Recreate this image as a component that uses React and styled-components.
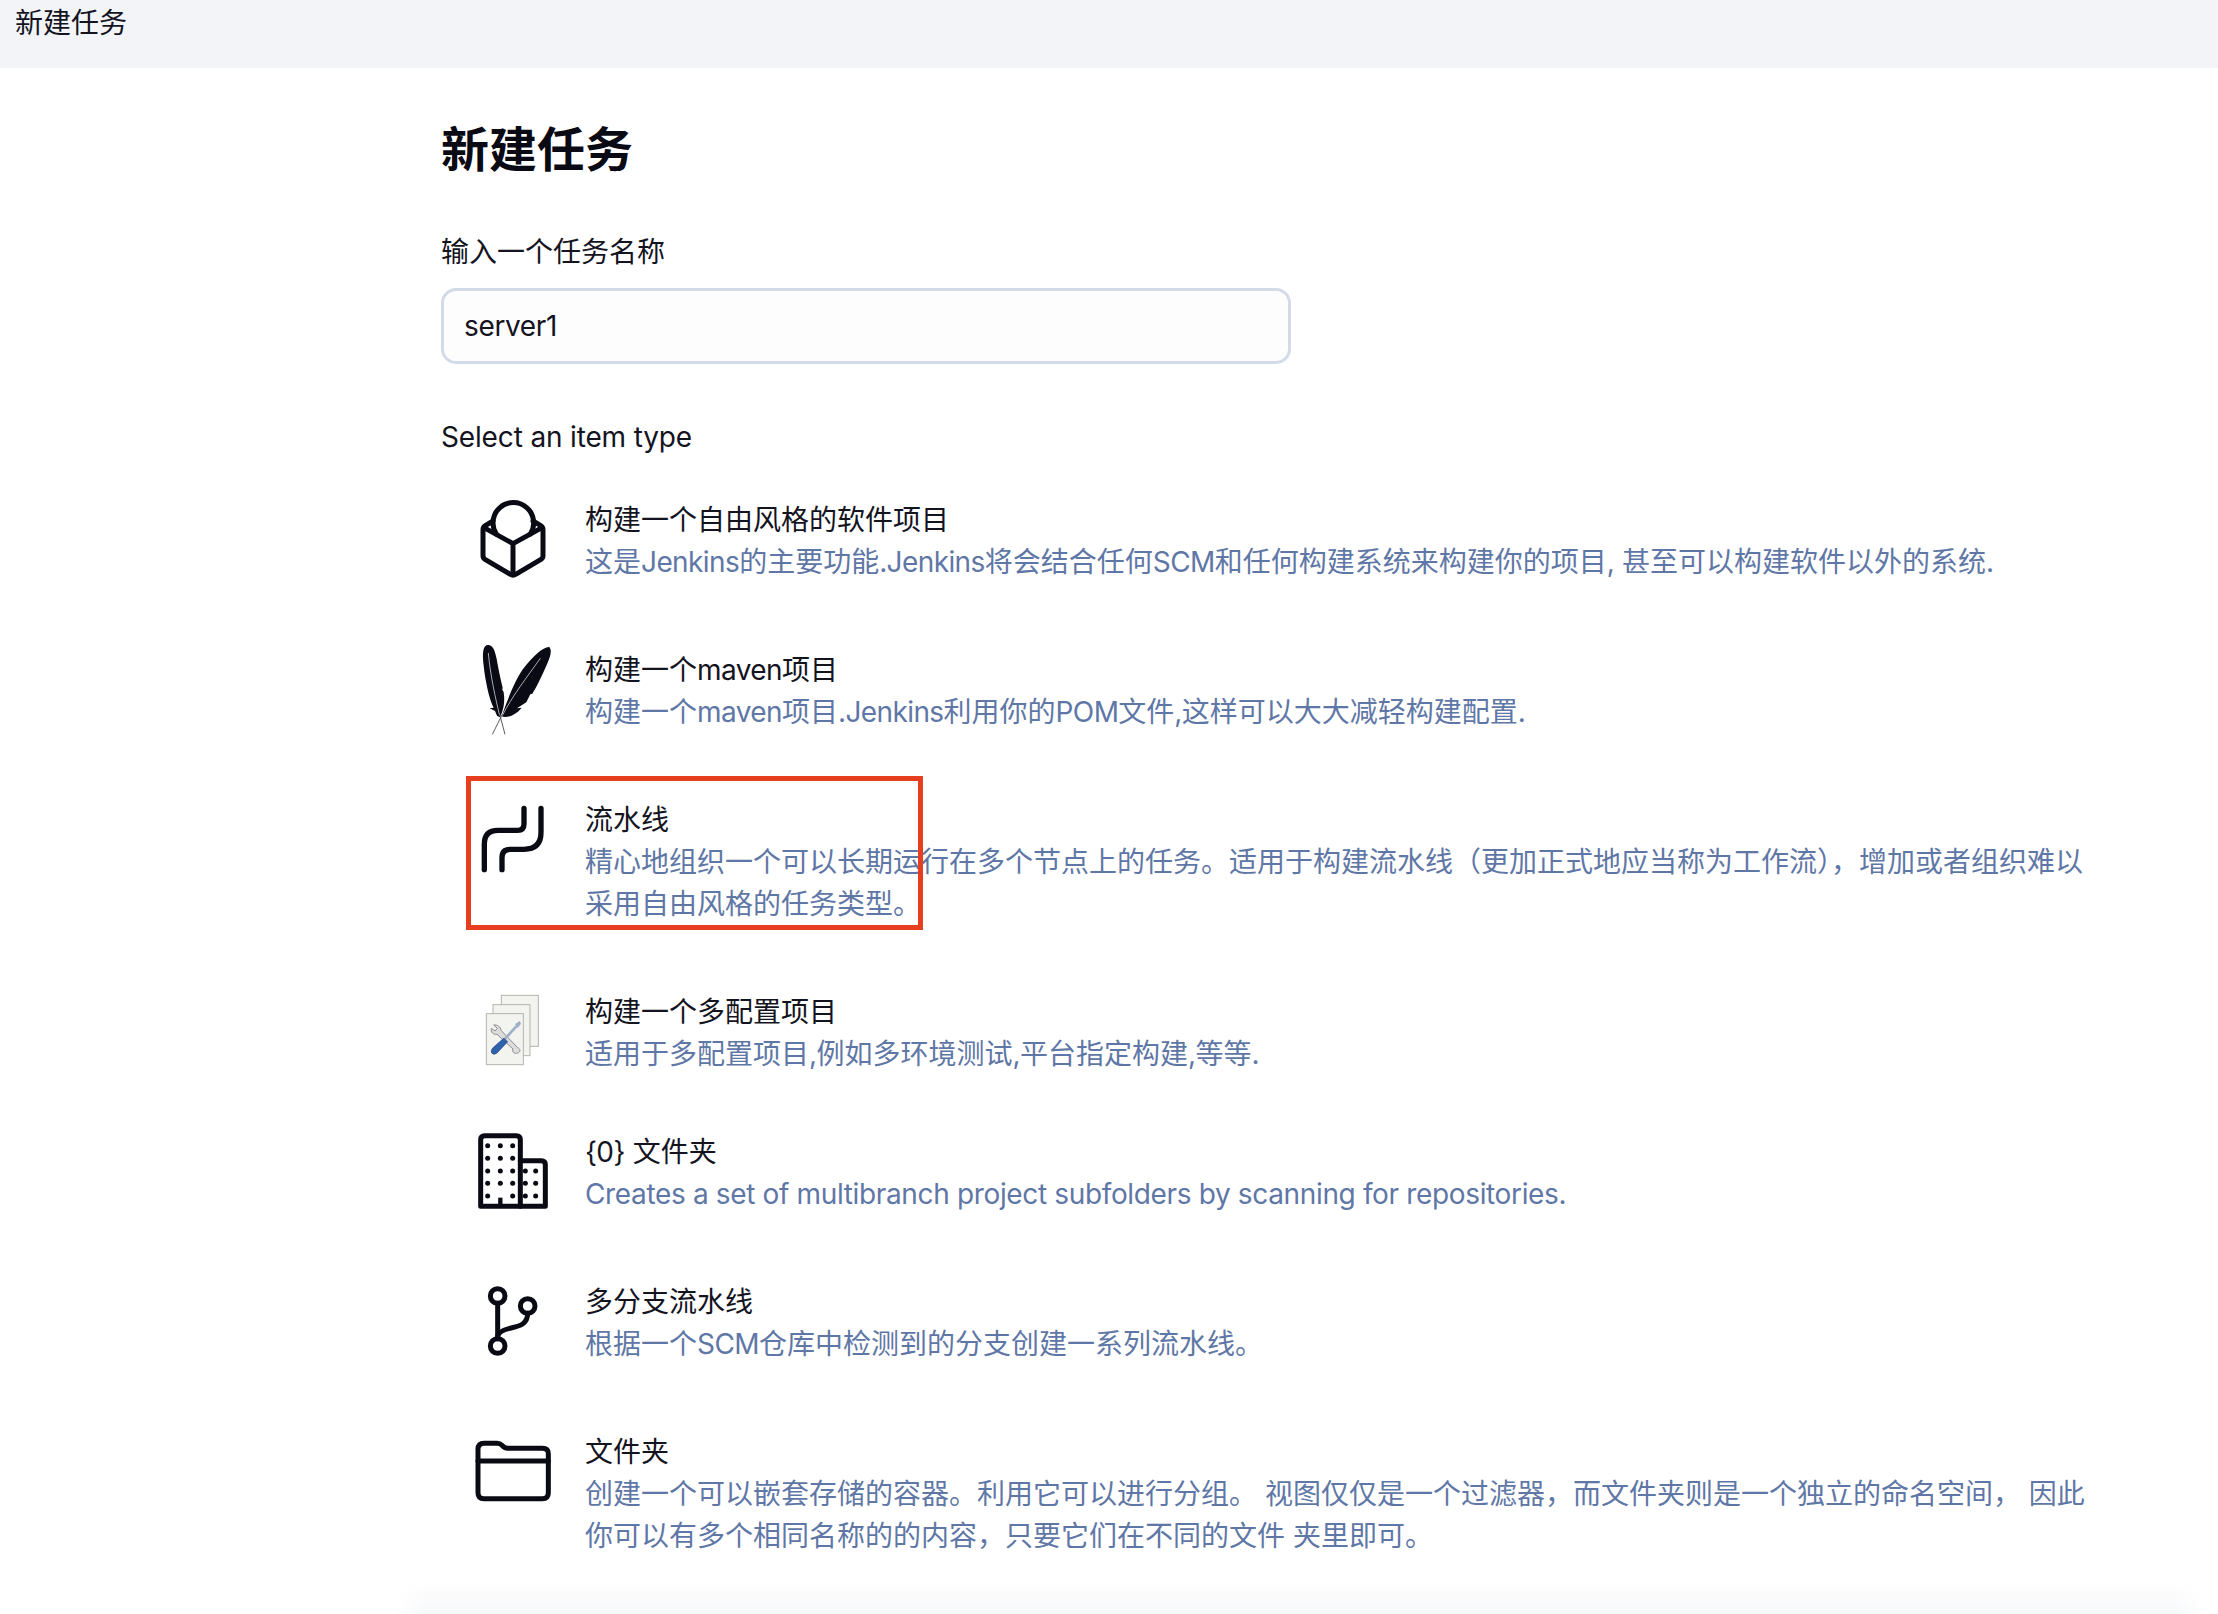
import styled, { createGlobalStyle } from "styled-components";

const GlobalStyle = createGlobalStyle`
    html, body {
        margin: 0;
        padding: 0;
        height: 100%;
        overflow: hidden;
        background: #fff;
    }
    body {
        font-family: "Inter", "Noto Sans CJK SC", sans-serif;
        font-size: 28px;
        line-height: 42px;
        color: #14141f;
    }
`;

const TopBar = styled.header`
    height: 68px;
    padding-left: 15px;
    background: #f3f4f8;
    line-height: 46px;
`;

const Main = styled.main`
    width: 1660px;
    margin-left: 441px;
`;

const Heading = styled.h1`
    margin: 0;
    padding-top: 46px;
    font-size: 48px;
    line-height: 72px;
    font-weight: 700;
    color: #0a0a14;
`;

const FieldLabel = styled.label`
    display: block;
    margin-top: 45px;
`;

const NameInput = styled.input`
    display: block;
    box-sizing: border-box;
    width: 850px;
    height: 76px;
    margin-top: 15px;
    padding: 0 20px;
    border: 3px solid #d3dae8;
    border-radius: 15px;
    background: #fdfdfe;
    font: inherit;
    letter-spacing: -0.35px;
    color: inherit;
    outline: none;
`;

const SectionLabel = styled.div`
    margin-top: 52px;
    letter-spacing: -0.15px;
`;

const ItemList = styled.div`
    display: flex;
    flex-direction: column;
    margin-top: 41px;
`;

const Item = styled.div`
    position: relative;
    display: flex;
    gap: 32px;
    padding-left: 32px;
    padding-bottom: ${props => props.$bottom || 66}px;
`;

const IconBox = styled.div`
    flex: none;
    width: 80px;
    height: 80px;

    svg {
        display: block;
        width: 80px;
        height: 80px;
        overflow: visible;
    }
`;

const ItemText = styled.div`
    width: 1510px;
`;

const ItemTitle = styled.div``;

const ItemDesc = styled.div`
    color: #5f77a6;
`;

const Latin = styled.span`
    letter-spacing: ${props => (props.$short ? "-0.6px" : "-0.35px")};
`;

// red box somebody drew over the screenshot
const Annotation = styled.div`
    position: absolute;
    left: 25px;
    top: -23px;
    box-sizing: border-box;
    width: 457px;
    height: 154px;
    border: 5px solid #e63e1e;
    pointer-events: none;
`;

const BottomFade = styled.div`
    position: fixed;
    left: 395px;
    right: 12px;
    bottom: 0;
    height: 32px;
    background: linear-gradient(to bottom, rgba(246, 247, 250, 0), #f7f8fa);
    mask-image: linear-gradient(to right, transparent, #000 30px, #000 calc(100% - 30px), transparent);
`;

const line = {
    fill: "none",
    stroke: "#0a0a14",
    strokeWidth: 15,
    strokeLinecap: "round",
    strokeLinejoin: "round",
};

const FreestyleIcon = () => (
    <svg viewBox="0 0 240 240">
        <g {...line}>
            <path d="M70 105A61 61 0 1 1 172 105" />
            <path d="M60 66L38 79Q30 84 30 92V170Q30 177 36 181L112 226Q120 230 128 226L204 181Q210 177 210 170V92Q210 84 202 79L180 66" />
            <path d="M33 86L120 134L207 86M120 134V228" />
        </g>
    </svg>
);

const MavenIcon = () => (
    <svg viewBox="0 0 240 240">
        <path
            fill="#0a0a14"
            d="M47 -12C30 -14 27 10 32 50C36 90 48 150 62 176L50 178L66 186L72 200L80 205C90 190 97 160 92 130L86 118L90 120C85 100 78 70 71 30C66 5 60 -10 47 -12Z"
        />
        <path
            fill="#0a0a14"
            d="M229 -6C213 -8 180 20 150 60C126 94 104 150 86 202C100 208 128 200 146 176L132 178L160 160L172 136L178 134C196 104 208 76 220 50C232 25 238 5 229 -6Z"
        />
        <path fill="none" stroke="#c9c9cf" strokeWidth="2.5" d="M46 12C52 80 68 150 80 200M202 28C165 80 115 145 88 200" />
        <path fill="none" stroke="#3a3a44" strokeWidth="2.5" d="M80 196L96 256M88 196L58 256" />
    </svg>
);

const PipelineIcon = () => (
    <svg viewBox="0 0 240 240">
        <g {...line} strokeWidth="16">
            <path d="M153 28V75Q153 94 134 94H75Q34 94 34 135V212" />
            <path d="M204 28V100Q204 151 153 151H112Q87 151 87 176V212" />
        </g>
    </svg>
);

const MatrixIcon = () => (
    <svg viewBox="0 0 240 240">
        <g fill="#f3f3f0" stroke="#b4b4ae" strokeWidth="3">
            <rect x="85" y="13" width="111" height="153" />
            <rect x="60" y="41" width="111" height="153" />
            <rect x="40" y="68" width="111" height="153" />
        </g>
        <path
            fill="#dcdcdc"
            stroke="#8e8e8e"
            strokeWidth="3"
            d="M62 102C72 100 84 108 84 118L134 170C142 172 144 184 134 186C124 190 116 182 120 174L72 130C62 132 52 124 55 112L66 120L73 112Z"
        />
        <path fill="none" stroke="#9db0c8" strokeWidth="8" d="M92 148L130 106" />
        <path fill="#9db0c8" d="M126 100L140 90L144 98L134 112Z" />
        <path fill="#2f62ad" stroke="#1f4684" strokeWidth="2" d="M92 142L104 152L72 186Q62 194 56 186Q52 178 60 170Z" />
    </svg>
);

const dots = [44, 82, 119].flatMap(x => [44, 82, 120, 157, 195].map(y => [x, y]))
    .concat([157, 188].flatMap(x => [120, 157, 195].map(y => [x, y])));

const FolderScanIcon = () => (
    <svg viewBox="0 0 240 240">
        <g {...line}>
            <path d="M142 226H23V26Q23 14 35 14H130Q142 14 142 26V226" />
            <path d="M142 89H205Q217 89 217 101V226H142" />
            <path d="M82 226V200" strokeLinecap="butt" strokeWidth="13" />
        </g>
        {dots.filter(([x, y]) => !(x === 82 && y === 195)).map(([x, y]) => (
            <circle key={x + "-" + y} cx={x} cy={y} r="7.5" fill="#0a0a14" />
        ))}
    </svg>
);

const BranchIcon = () => (
    <svg viewBox="0 0 240 240">
        <g {...line}>
            <circle cx="74" cy="45" r="22" />
            <circle cx="164" cy="75" r="22" />
            <circle cx="74" cy="195" r="22" />
            <path d="M74 67V173" />
            <path d="M164 97C164 130 140 135 110 142C90 147 74 155 74 168" />
        </g>
    </svg>
);

const FolderIcon = () => (
    <svg viewBox="0 0 240 240">
        <g {...line}>
            <path d="M15 55Q15 37 33 37H72Q81 37 87 43Q94 52 104 52H208Q226 52 226 68V185Q226 203 208 203H33Q15 203 15 185Z" />
            <path d="M15 90H226" />
        </g>
    </svg>
);

const items = [
    {
        icon: <FreestyleIcon />,
        title: "构建一个自由风格的软件项目",
        desc: "这是Jenkins的主要功能.Jenkins将会结合任何SCM和任何构建系统来构建你的项目, 甚至可以构建软件以外的系统.",
    },
    {
        icon: <MavenIcon />,
        title: "构建一个maven项目",
        desc: "构建一个maven项目.Jenkins利用你的POM文件,这样可以大大减轻构建配置.",
    },
    {
        icon: <PipelineIcon />,
        title: "流水线",
        desc: "精心地组织一个可以长期运行在多个节点上的任务。适用于构建流水线（更加正式地应当称为工作流），增加或者组织难以采用自由风格的任务类型。",
        marked: true,
    },
    {
        icon: <MatrixIcon />,
        title: "构建一个多配置项目",
        desc: "适用于多配置项目,例如多环境测试,平台指定构建,等等.",
        bottom: 56,
    },
    {
        icon: <FolderScanIcon />,
        title: "{0} 文件夹",
        desc: "Creates a set of multibranch project subfolders by scanning for repositories.",
    },
    {
        icon: <BranchIcon />,
        title: "多分支流水线",
        desc: "根据一个SCM仓库中检测到的分支创建一系列流水线。",
    },
    {
        icon: <FolderIcon />,
        title: "文件夹",
        desc: "创建一个可以嵌套存储的容器。利用它可以进行分组。 视图仅仅是一个过滤器，而文件夹则是一个独立的命名空间， 因此你可以有多个相同名称的的内容，只要它们在不同的文件 夹里即可。",
    },
];

const withLatin = (text) =>
    text.split(/([\x21-\x7e]+(?: [\x21-\x7e]+)*)/).map((part, i) =>
        i % 2 ? <Latin key={i} $short={part.length < 20}>{part}</Latin> : part
    );

function App() {
    return (
        <div lang="zh-CN">
            <GlobalStyle />
            <TopBar>新建任务</TopBar>
            <Main>
                <Heading>新建任务</Heading>
                <FieldLabel htmlFor="name">输入一个任务名称</FieldLabel>
                <NameInput id="name" type="text" defaultValue="server1" />
                <SectionLabel>Select an item type</SectionLabel>
                <ItemList>
                    {items.map(item => (
                        <Item key={item.title} $bottom={item.bottom}>
                            <IconBox>{item.icon}</IconBox>
                            <ItemText>
                                <ItemTitle>{withLatin(item.title)}</ItemTitle>
                                <ItemDesc>{withLatin(item.desc)}</ItemDesc>
                            </ItemText>
                            {item.marked && <Annotation />}
                        </Item>
                    ))}
                </ItemList>
            </Main>
            <BottomFade />
        </div>
    );
}

export default App;
